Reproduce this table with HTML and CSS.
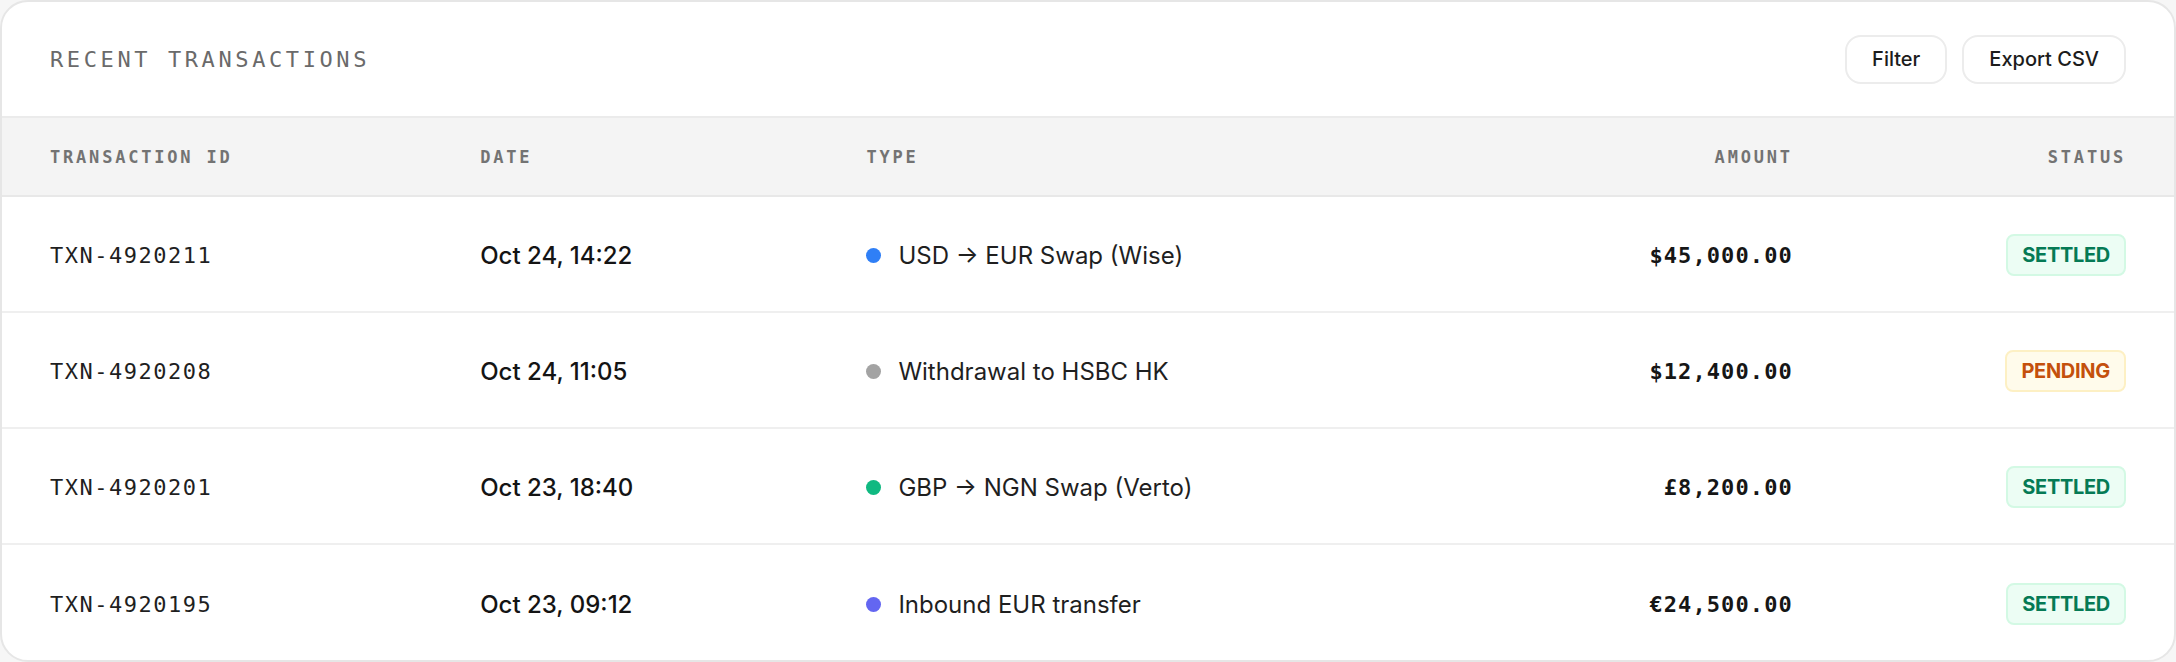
FILE: index.html
```html
<!DOCTYPE html>
<html lang="en">
<head>
  <meta charset="UTF-8">
  <meta name="viewport" content="width=device-width, initial-scale=1.0">
  <title>Recent Transactions</title>
  <link rel="stylesheet" href="styles.css">
</head>
<body>
  <div class="card">
    <div class="card-top">
      <h2 class="title">Recent Transactions</h2>
      <div class="actions">
        <button class="btn">Filter</button>
        <button class="btn">Export CSV</button>
      </div>
    </div>

    <div class="row head">
      <div>Transaction ID</div>
      <div>Date</div>
      <div>Type</div>
      <div class="right">Amount</div>
      <div class="right">Status</div>
    </div>

    <div class="row">
      <div class="mono">TXN-4920211</div>
      <div class="date">Oct 24, 14:22</div>
      <div class="type"><span class="dot blue"></span>USD → EUR Swap (Wise)</div>
      <div class="amount right">$45,000.00</div>
      <div class="right"><span class="badge settled">Settled</span></div>
    </div>

    <div class="row">
      <div class="mono">TXN-4920208</div>
      <div class="date">Oct 24, 11:05</div>
      <div class="type"><span class="dot gray"></span>Withdrawal to HSBC HK</div>
      <div class="amount right">$12,400.00</div>
      <div class="right"><span class="badge pending">Pending</span></div>
    </div>

    <div class="row">
      <div class="mono">TXN-4920201</div>
      <div class="date">Oct 23, 18:40</div>
      <div class="type"><span class="dot green"></span>GBP → NGN Swap (Verto)</div>
      <div class="amount right">£8,200.00</div>
      <div class="right"><span class="badge settled">Settled</span></div>
    </div>

    <div class="row last">
      <div class="mono">TXN-4920195</div>
      <div class="date">Oct 23, 09:12</div>
      <div class="type"><span class="dot indigo"></span>Inbound EUR transfer</div>
      <div class="amount right">€24,500.00</div>
      <div class="right"><span class="badge settled">Settled</span></div>
    </div>
  </div>
</body>
</html>
```

FILE: styles.css
```css
/* General */
body {
  margin: 0;
  background: #f6f6f6;
  font-family: 'Inter', 'Noto Sans', sans-serif;
  color: #1c1c1c;
}

.card {
  box-sizing: border-box;
  height: 100vh;
  background: #fff;
  border: 2px solid #e6e6e6;
  border-radius: 28px;
  overflow: hidden;
}

/* Top bar */
.card-top {
  height: 114px;
  padding: 0 48px;
  display: flex;
  align-items: center;
  justify-content: space-between;
}

.title {
  margin: 0;
  font-family: 'DejaVu Sans Mono', monospace;
  font-size: 22px;
  font-weight: 400;
  letter-spacing: 3.6px;
  text-transform: uppercase;
  color: #6a6a6a;
}

.actions {
  display: flex;
  gap: 15px;
}

.btn {
  height: 49px;
  padding: 0 25px;
  background: #fff;
  border: 2px solid #ececec;
  border-radius: 16px;
  font-family: 'Inter', sans-serif;
  font-size: 20px;
  font-weight: 500;
  color: #1c1c1c;
  cursor: pointer;
}

/* Table rows */
.row {
  box-sizing: border-box;
  height: 116px;
  padding: 2px 48px 0;
  display: grid;
  grid-template-columns: 430fr 386fr 666fr 260fr 333fr;
  align-items: center;
  border-bottom: 2px solid #efefef;
}

.row.last {
  border-bottom: none;
}

.row.head {
  height: 81px;
  padding-top: 0;
  background: #f4f4f4;
  border-top: 2px solid #ebebeb;
  border-bottom: 2px solid #e8e8e8;
  font-family: 'DejaVu Sans Mono', monospace;
  font-size: 17px;
  font-weight: 700;
  letter-spacing: 2.8px;
  text-transform: uppercase;
  color: #737373;
}

.right {
  text-align: right;
}

.mono {
  font-family: 'DejaVu Sans Mono', monospace;
  font-size: 22px;
  letter-spacing: 1.5px;
  color: #1f1f1f;
}

.date {
  font-size: 24px;
  font-weight: 500;
  color: #141414;
}

.type {
  display: flex;
  align-items: center;
  gap: 17px;
  font-size: 24px;
  color: #1f1f1f;
}

.dot {
  width: 15px;
  height: 15px;
  border-radius: 50%;
}

.dot.blue { background: #2f7ff6; }
.dot.gray { background: #a3a3a3; }
.dot.green { background: #10b981; }
.dot.indigo { background: #6366f1; }

.amount {
  font-family: 'DejaVu Sans Mono', monospace;
  font-size: 22px;
  font-weight: 700;
  letter-spacing: 1.1px;
  color: #161616;
}

/* Status badges */
.badge {
  display: inline-block;
  padding: 8px 14px;
  border-radius: 8px;
  border: 2px solid;
  font-size: 20px;
  font-weight: 700;
  line-height: 22px;
  text-transform: uppercase;
  letter-spacing: -0.3px;
}

.badge.settled {
  background: #ecfdf4;
  border-color: #d3f9e4;
  color: #057a55;
}

.badge.pending {
  background: #fffbeb;
  border-color: #fdf0c4;
  color: #c4500c;
}
```
